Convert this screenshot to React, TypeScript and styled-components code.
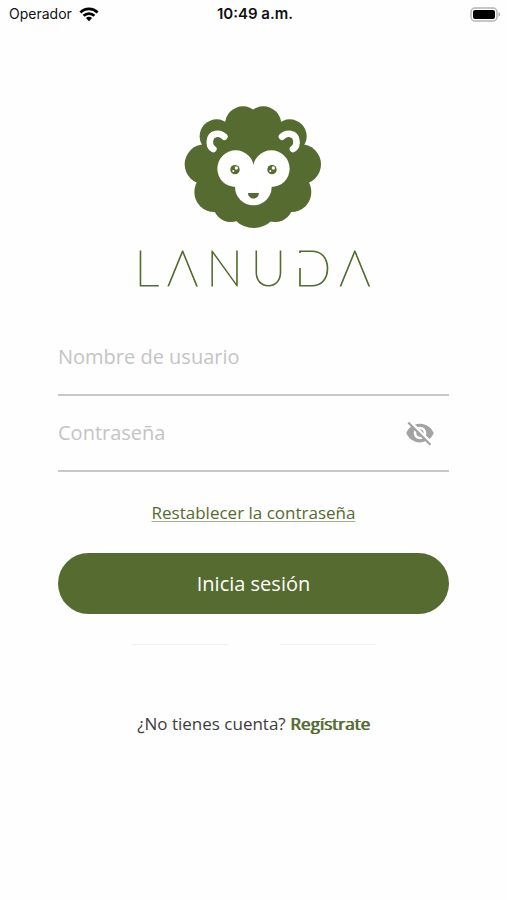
import React, { useState } from "react";
import styled, { createGlobalStyle } from "styled-components";

const green = "#556b2f";

const GlobalStyle = createGlobalStyle`
  *, *::before, *::after { box-sizing: border-box; }
  body {
    margin: 0;
    background: #fefefe;
    color: #3c3c3c;
    font-family: "Open Sans", "Noto Sans", sans-serif;
  }
`;

const Screen = styled.div`
  display: flex;
  flex-direction: column;
  min-height: 100vh;
`;

const StatusBar = styled.header`
  display: grid;
  grid-template-columns: 1fr auto 1fr;
  align-items: center;
  height: 28px;
  padding: 0 6px 0 9px;
  color: #111;
  font: 400 14px/20px Inter, "Liberation Sans", sans-serif;
`;

const Carrier = styled.div`
  display: flex;
  align-items: center;
  gap: 7px;
`;

const Clock = styled.time`
  font-size: 15px;
  font-weight: 600;
`;

const BatterySlot = styled.div`
  display: flex;
  justify-content: flex-end;
`;

const Content = styled.main`
  display: flex;
  flex-direction: column;
  align-items: stretch;
  padding: 67px 58px 0;
`;

const Brand = styled.div`
  display: flex;
  flex-direction: column;
  align-items: center;
`;

const Wordmark = styled.h1`
  margin: 3px 0 0;
  color: ${green};
  font: 200 49px/58px Lato, Inter, sans-serif;
  letter-spacing: 8px;
  padding-left: 6px;
  white-space: nowrap;
  -webkit-text-stroke: 1px ${green};
`;

const OpenStem = styled.span`
  position: relative;

  &::after {
    content: "";
    position: absolute;
    left: 2px;
    top: 15px;
    width: 8px;
    height: 15px;
    background: #fefefe;
  }
`;

const Form = styled.form`
  display: flex;
  flex-direction: column;
  margin-top: 24px;
`;

const Field = styled.div`
  display: flex;
  align-items: center;
  height: 76px;
  padding-right: 14px;
  border-bottom: 2px solid #c8c8c8;
`;

const Input = styled.input`
  flex: 1;
  min-width: 0;
  height: 40px;
  padding: 0 0 2px;
  border: 0;
  outline: 0;
  background: transparent;
  color: #3c3c3c;
  font: 400 20px/28px "Open Sans", "Noto Sans", sans-serif;

  &::placeholder {
    color: #c4c4c4;
    opacity: 1;
  }
`;

const IconButton = styled.button`
  display: flex;
  padding: 0;
  border: 0;
  background: transparent;
  color: #a3a3a3;
  cursor: pointer;
`;

const ResetLink = styled.a`
  align-self: center;
  margin-top: 29px;
  color: ${green};
  font-size: 17px;
  line-height: 24px;
  text-decoration-color: #a3ae90;
  text-decoration-thickness: 1px;
  text-underline-offset: 2px;
`;

const SubmitButton = styled.button`
  height: 61px;
  margin-top: 28px;
  border: 0;
  border-radius: 31px;
  background: ${green};
  color: #fff;
  font: 400 20px/28px "Open Sans", "Noto Sans", sans-serif;
  cursor: pointer;
`;

const Divider = styled.div`
  display: flex;
  justify-content: center;
  gap: 52px;
  margin-top: 30px;
`;

const Rule = styled.span`
  width: 96px;
  height: 1px;
  background: #efefef;
`;

const SignUp = styled.p`
  margin: 67px 0 0;
  font-size: 17px;
  line-height: 24px;
  text-align: center;
`;

const SignUpLink = styled.a`
  color: ${green};
  text-decoration: none;
  text-shadow: 1px 0 0 ${green};
`;

const WifiIcon = () => (
  <svg width="20" height="15" viewBox="0 0 20 15" fill="none" stroke="#000" strokeWidth="2.8" aria-hidden="true">
    <path d="M1.4 5.4C6.2.7 13.8.7 18.6 5.4" />
    <path d="M4.6 8.7c3-2.9 7.8-2.9 10.8 0" />
    <path d="M10 14.2 6.9 11c1.7-1.6 4.5-1.6 6.2 0Z" fill="#000" stroke="none" />
  </svg>
);

const BatteryIcon = () => (
  <svg width="31" height="15" viewBox="0 0 31 15" aria-hidden="true">
    <rect x="1" y="1" width="26" height="13" rx="4" fill="#fff" stroke="#b5b5b5" strokeWidth="1.5" />
    <rect x="3" y="3" width="22" height="9" rx="2" fill="#000" />
    <path d="M28.5 5.3c2 .6 2 3.8 0 4.4Z" fill="#aaa" />
  </svg>
);

const SheepLogo = () => (
  <svg width="160" height="140" viewBox="-2 0 480 420" role="img" aria-label="Oveja de Lanuda">
    <g fill={green}>
      <circle cx="205" cy="88" r="54" />
      <circle cx="266" cy="88" r="54" />
      <circle cx="126" cy="124" r="51" />
      <circle cx="345" cy="124" r="51" />
      <circle cx="90" cy="208" r="60" />
      <circle cx="379" cy="208" r="60" />
      <circle cx="119" cy="291" r="60" />
      <circle cx="350" cy="291" r="60" />
      <circle cx="168" cy="328" r="53" />
      <circle cx="302" cy="328" r="53" />
      <circle cx="237" cy="322" r="77" />
      <ellipse cx="235" cy="210" rx="138" ry="145" />
    </g>
    <g fill="#fff">
      <circle cx="183" cy="221" r="55" />
      <circle cx="290" cy="221" r="55" />
      <circle cx="236" cy="276" r="55" />
      <path d="M232 211h9l18 54h-46Z" />
    </g>
    <g fill="none" stroke="#fff" strokeWidth="20" strokeLinecap="round">
      <path d="M149 125C135 111 109 114 106 135C104 146 108 157 116 162" />
      <path d="M322 125C336 111 362 114 365 135C367 146 363 157 355 162" />
    </g>
    <g fill={green}>
      <circle cx="181" cy="224" r="14" />
      <circle cx="292" cy="224" r="14" />
      <path d="M220 294h33c-1 22-32 22-33 0Z" />
    </g>
    <g fill="#fff">
      <circle cx="185" cy="219" r="5" />
      <circle cx="176" cy="228" r="3" />
      <circle cx="296" cy="219" r="5" />
      <circle cx="287" cy="228" r="3" />
    </g>
  </svg>
);

const EyeOffIcon = () => (
  <svg width="30" height="30" viewBox="0 0 24 24" fill="currentColor" aria-hidden="true">
    <path d="M12 7c2.76 0 5 2.24 5 5 0 .65-.13 1.26-.36 1.83l2.92 2.92c1.51-1.26 2.7-2.89 3.43-4.75-1.73-4.39-6-7.5-11-7.5-1.4 0-2.74.25-3.98.7l2.16 2.16C10.74 7.13 11.35 7 12 7zM2 4.27l2.28 2.28.46.46C3.08 8.3 1.78 10.02 1 12c1.73 4.39 6 7.5 11 7.5 1.55 0 3.03-.3 4.38-.84l.42.42L19.73 22 21 20.73 3.27 3 2 4.27zM7.53 9.8l1.55 1.55c-.05.21-.08.43-.08.65 0 1.66 1.34 3 3 3 .22 0 .44-.03.65-.08l1.55 1.55c-.67.33-1.41.53-2.2.53-2.76 0-5-2.24-5-5 0-.79.2-1.53.53-2.2zm4.31-.78 3.15 3.15.02-.16c0-1.66-1.34-3-3-3l-.17.01z" />
  </svg>
);

export default function App() {
  const [visible, setVisible] = useState(false);

  return (
    <>
      <GlobalStyle />
      <Screen>
        <StatusBar>
          <Carrier>
            Operador
            <WifiIcon />
          </Carrier>
          <Clock>10:49 a.m.</Clock>
          <BatterySlot>
            <BatteryIcon />
          </BatterySlot>
        </StatusBar>
        <Content>
          <Brand>
            <SheepLogo />
            <Wordmark aria-label="Lanuda">
              LΛNU<OpenStem>D</OpenStem>Λ
            </Wordmark>
          </Brand>
          <Form onSubmit={(event) => event.preventDefault()}>
            <Field>
              <Input type="text" aria-label="Nombre de usuario" placeholder="Nombre de usuario" autoComplete="username" />
            </Field>
            <Field>
              <Input
                type={visible ? "text" : "password"}
                aria-label="Contraseña"
                placeholder="Contraseña"
                autoComplete="current-password"
              />
              <IconButton
                type="button"
                aria-label="Mostrar contraseña"
                aria-pressed={visible}
                onClick={() => setVisible(!visible)}
              >
                <EyeOffIcon />
              </IconButton>
            </Field>
            <ResetLink href="#restablecer">Restablecer la contraseña</ResetLink>
            <SubmitButton type="submit">Inicia sesión</SubmitButton>
          </Form>
          <Divider aria-hidden="true">
            <Rule />
            <Rule />
          </Divider>
          <SignUp>
            ¿No tienes cuenta? <SignUpLink href="#registro">Regístrate</SignUpLink>
          </SignUp>
        </Content>
      </Screen>
    </>
  );
}
